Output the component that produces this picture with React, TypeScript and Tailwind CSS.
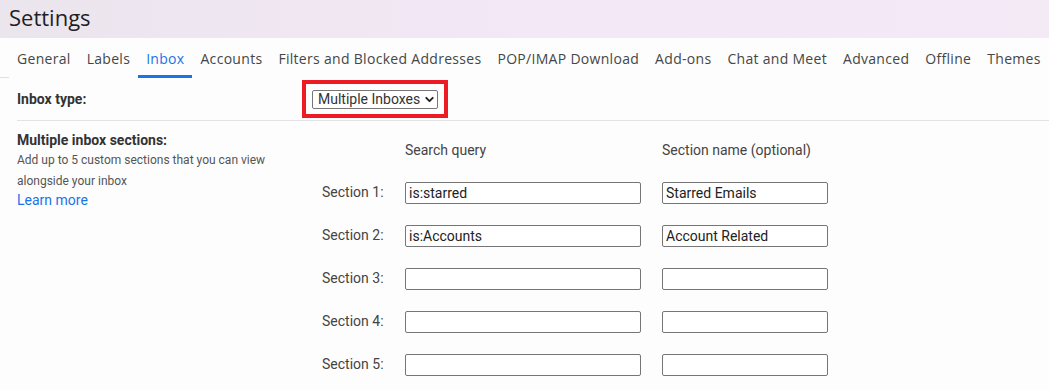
import { ChevronDown } from "lucide-react";

const tabs = [
  "General",
  "Labels",
  "Inbox",
  "Accounts",
  "Filters and Blocked Addresses",
  "POP/IMAP Download",
  "Add-ons",
  "Chat and Meet",
  "Advanced",
  "Offline",
  "Themes",
];

const sections = [
  { query: "is:starred", name: "Starred Emails" },
  { query: "is:Accounts", name: "Account Related" },
  { query: "", name: "" },
  { query: "", name: "" },
  { query: "", name: "" },
];

function Tabs() {
  return (
    <div className="flex h-[40px] items-stretch font-['Open_Sans',sans-serif] text-[14px] tracking-[0.3px] text-[#444746]">
      <div className="w-[9px] border-b border-[#e0e0e0]" />
      {tabs.map((tab) => (
        <div
          key={tab}
          className={
            tab === "Inbox"
              ? "flex items-center whitespace-nowrap border-b-[3px] border-[#1a73e8] px-[8px] pt-[3px] text-[#1a73e8]"
              : "flex items-center whitespace-nowrap border-b-[3px] border-transparent px-[8px] pt-[3px]"
          }
        >
          {tab}
        </div>
      ))}
    </div>
  );
}

function SectionRow({
  index,
  query,
  name,
}: {
  index: number;
  query: string;
  name: string;
}) {
  return (
    <div className="flex h-[43px] items-center">
      <span className="w-[83px] text-[14px] text-[#444]">Section {index}:</span>
      <input
        defaultValue={query}
        className="h-[22px] w-[236px] rounded-[2px] border border-[#767676] bg-white px-[3px] text-[14px] text-[#222] outline-none"
      />
      <input
        defaultValue={name}
        className="ml-[21px] h-[22px] w-[166px] rounded-[2px] border border-[#767676] bg-white px-[3px] text-[14px] text-[#222] outline-none"
      />
    </div>
  );
}

export default function App() {
  return (
    <div className="h-[390px] w-[1049px] overflow-hidden bg-[#fdfdfd] font-['Roboto',sans-serif]">
      <div className="flex h-[38px] items-start bg-linear-to-r from-[#ebe5ed] via-[#f3e8f6] to-[#f4eaf6] pl-[9px] pt-[2px]">
        <h1 className="font-['Open_Sans',sans-serif] text-[22px] leading-[30px] text-[#1f1f1f]">
          Settings
        </h1>
      </div>

      <Tabs />

      <div className="ml-[17px] flex h-[43px] items-start border-b border-[#e3e3e3] pt-[2px]">
        <div className="flex h-[38px] w-[285px] items-center text-[14px] font-bold text-[#333]">
          Inbox type:
        </div>
        <div className="flex h-[38px] items-center border-[4px] border-[#ed1c24] px-[6px]">
          <label className="flex h-[19px] w-[126px] items-center gap-[3px] rounded-[2px] border border-[#767676] bg-white pl-[5px] pr-[3px]">
            <select className="w-[102px] appearance-none bg-transparent text-[14px] leading-[17px] text-[#333] outline-none">
              <option>Multiple Inboxes</option>
            </select>
            <ChevronDown size={13} strokeWidth={3.5} className="shrink-0 text-[#222]" />
          </label>
        </div>
      </div>

      <div className="flex pl-[17px] pt-[9px]">
        <div className="w-[285px]">
          <div className="text-[14px] font-bold leading-[20px] text-[#333]">
            Multiple inbox sections:
          </div>
          <p className="text-[12px] leading-[21px] text-[#555]">
            Add up to 5 custom sections that you can view
            <br />
            alongside your inbox
          </p>
          <a className="block text-[14px] leading-[17px] text-[#1a73e8]" href="#">
            Learn more
          </a>
        </div>

        <div className="pl-[20px] pt-[10px]">
          <div className="flex h-[20px] items-center text-[14px] text-[#444]">
            <span className="ml-[83px] w-[257px]">Search query</span>
            <span>Section name (optional)</span>
          </div>
          <div className="mt-[11px]">
            {sections.map((s, i) => (
              <SectionRow key={i} index={i + 1} query={s.query} name={s.name} />
            ))}
          </div>
        </div>
      </div>
    </div>
  );
}
